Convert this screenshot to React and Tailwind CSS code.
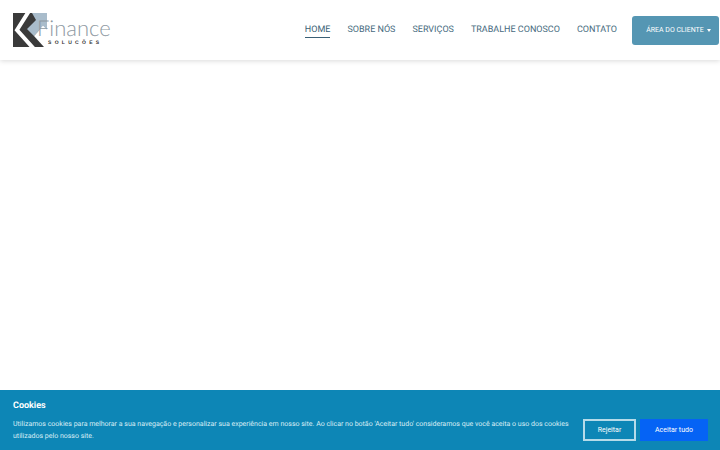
import React from "react";

const links = ["SOBRE NÓS", "SERVIÇOS", "TRABALHE CONOSCO", "CONTATO"];

function Logo() {
  return (
    <div className="flex items-start">
      <svg width="34" height="34" viewBox="0 0 34 34" className="shrink-0">
        <path d="M0 0H27V14L32 34H0Z" fill="#3a3a3a" />
        <path d="M16 -2L4 17L21 36" fill="none" stroke="#fff" strokeWidth="4" />
        <path d="M19 0H35V18L30 13L21 23L14 16L23 7Z" fill="#a9bccb" />
        <path d="M21 23L30 13L35 18V34H31Z" fill="#fff" />
      </svg>
      <div className="flex flex-col -ml-[10px] mt-[6px]">
        <span className="font-['Lato',sans-serif] font-light text-[22px] leading-[18px] text-[#8f9aa3]">Finance</span>
        <span className="font-['Liberation_Sans',sans-serif] font-bold text-[5px] leading-[6px] tracking-[3.3px] text-[#333] ml-[11px] mt-[3px]">SOLUCÕES</span>
      </div>
    </div>
  );
}

function App() {
  return (
    <div className="h-[450px] w-[720px] overflow-hidden flex flex-col justify-between bg-white font-['Roboto',sans-serif] [text-rendering:geometricPrecision]">
      {/* Navbar */}
      <div className="h-[60px] flex items-center justify-between pl-[13px] pr-px shadow-[0_1px_5px_rgba(0,0,0,0.15)]">
        <Logo />
        <div className="flex items-center">
          <a className="text-[#3a5f75] text-[9px] leading-[14px] border-b border-[#3a5f75] mr-[17px]">HOME</a>
          <div className="flex gap-[17px] mr-[15px]">
            {links.map((l) => (
              <a key={l} className="text-[#466a7e] text-[9px] leading-[14px] pb-px">{l}</a>
            ))}
          </div>
          <button className="h-[29px] w-[87px] bg-[#5596b3] rounded-[3px] text-white text-[7px] flex items-center justify-center gap-[3px] pl-[6px]">
            ÁREA DO CLIENTE
            <span className="border-x-[2.5px] border-x-transparent border-t-[3px] border-t-white" />
          </button>
        </div>
      </div>

      {/* Cookie bar */}
      <div className="h-[60px] bg-[#0d86b6] flex items-end justify-between pl-[13px] pr-[12px] pb-[8px]">
        <div className="w-[560px]">
          <h4 className="text-white text-[9px] font-bold leading-[12px] mb-[6px]">Cookies</h4>
          <p className="text-[#d8edf5] text-[7px] leading-[12px]">
            Utilizamos cookies para melhorar a sua navegação e personalizar sua experiência em nosso site. Ao clicar no botão 'Aceitar tudo' consideramos que você aceita o uso dos cookies utilizados pelo nosso site.
          </p>
        </div>
        <div className="flex gap-[4px] mb-px">
          <button className="w-[53px] h-[22px] border-2 border-[#b5dbe9] text-white text-[7px]">Rejeitar</button>
          <button className="w-[68px] h-[22px] bg-[#0563f5] text-white text-[7px]">Aceitar tudo</button>
        </div>
      </div>
    </div>
  );
}

export default App;
